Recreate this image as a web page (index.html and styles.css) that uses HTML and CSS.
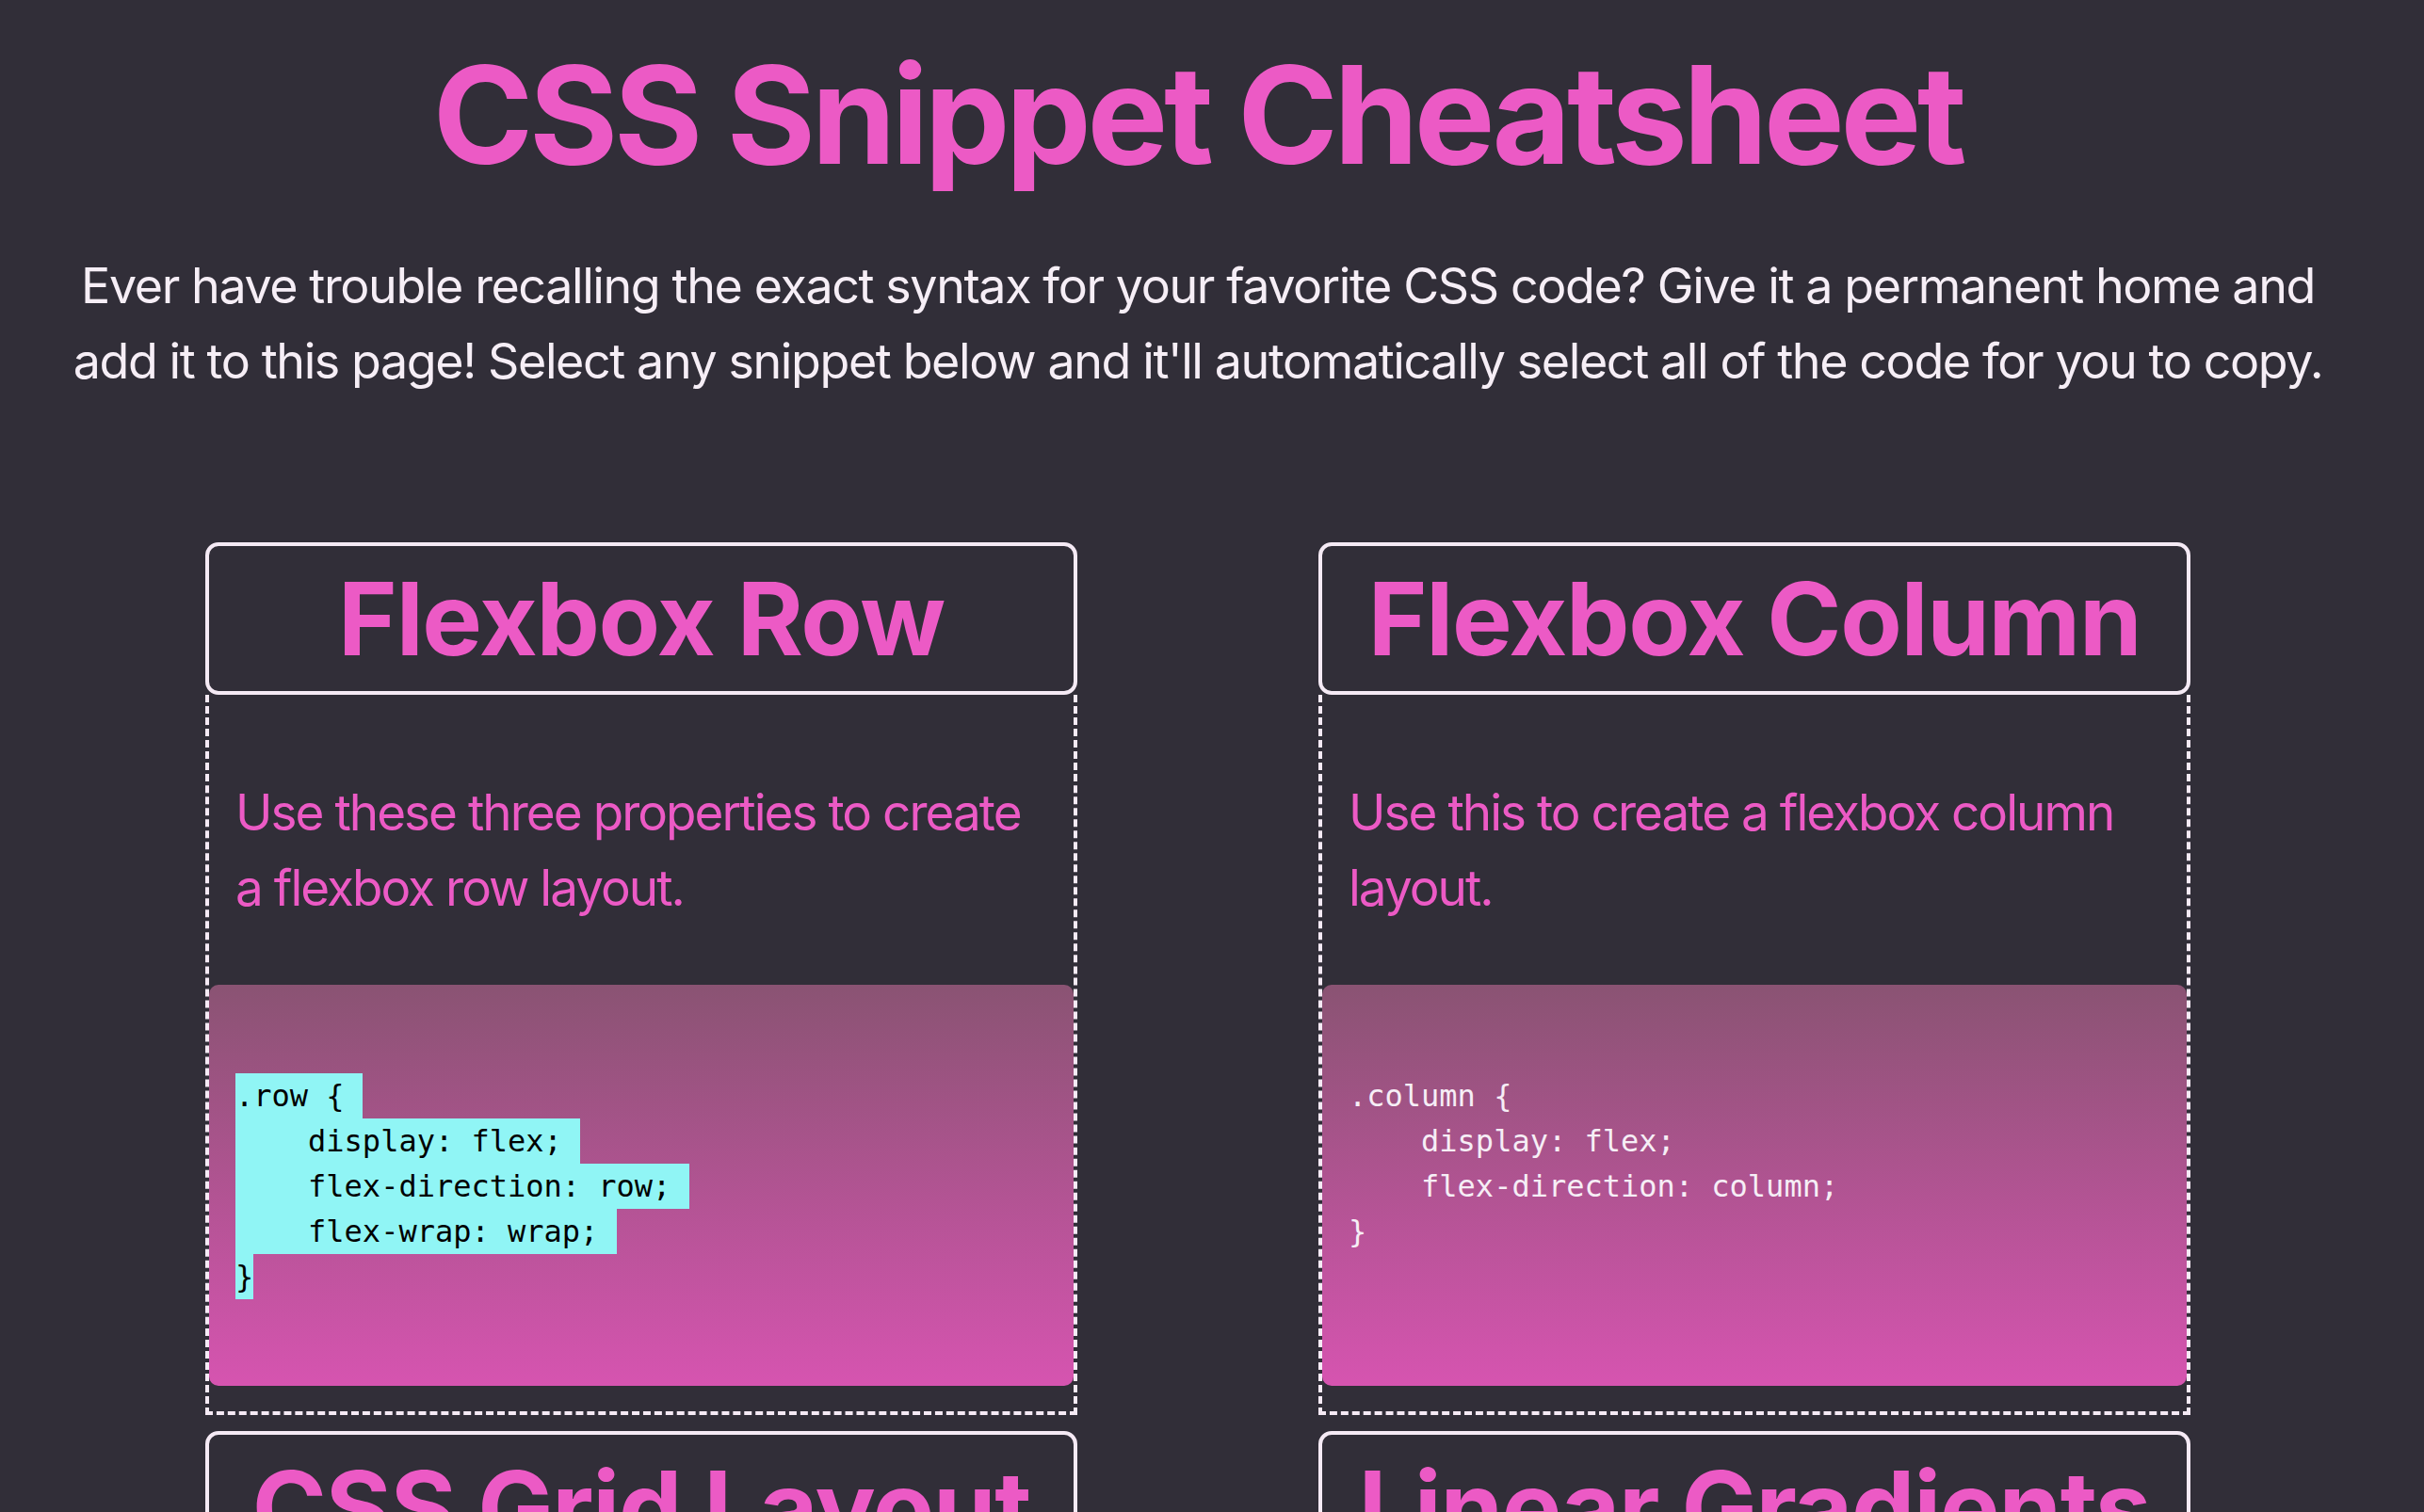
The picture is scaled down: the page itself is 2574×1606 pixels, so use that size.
FILE: index.html
```html
<!DOCTYPE html>
<html lang="en">
<head>
<meta charset="utf-8">
<title>CSS Snippet Cheatsheet</title>
<link rel="stylesheet" href="styles.css">
</head>
<body>
<h1 class="title">CSS Snippet Cheatsheet</h1>
<p class="intro">Ever have trouble recalling the exact syntax for your favorite CSS code? Give it a permanent home and add it to this page! Select any snippet below and it'll automatically select all of the code for you to copy.</p>
<main class="grid">
  <section class="card">
    <h2 class="card-title">Flexbox Row</h2>
    <div class="card-body">
      <p class="desc">Use these three properties to create a flexbox row layout.</p>
      <pre class="code"><span class="sel">.row {&nbsp;</span>
<span class="sel">    display: flex;&nbsp;</span>
<span class="sel">    flex-direction: row;&nbsp;</span>
<span class="sel">    flex-wrap: wrap;&nbsp;</span>
<span class="sel">}</span></pre>
    </div>
  </section>
  <section class="card">
    <h2 class="card-title">Flexbox Column</h2>
    <div class="card-body">
      <p class="desc">Use this to create a flexbox column layout.</p>
      <pre class="code">.column {
    display: flex;
    flex-direction: column;
}</pre>
    </div>
  </section>
  <section class="card">
    <h2 class="card-title">CSS Grid Layout</h2>
    <div class="card-body">
      <p class="desc">Build a 12-column grid using CSS Grid.</p>
      <pre class="code">.grid {
    display: grid;
    grid-template-columns: repeat(12, 1fr);
}</pre>
    </div>
  </section>
  <section class="card">
    <h2 class="card-title">Linear Gradients</h2>
    <div class="card-body">
      <p class="desc">Use this for a linear gradient background.</p>
      <pre class="code">.gradient {
    background: linear-gradient(#8b5373, #d654ae);
}</pre>
    </div>
  </section>
</main>
</body>
</html>
```
FILE: styles.css
```css
html, body {
  margin: 0;
  padding: 0;
  background: #312e38;
}
body {
  padding-right: 30px;
  font-family: Inter, "Noto Sans", sans-serif;
  color: #f6eef6;
}
.title {
  margin: 36px 0 0;
  text-align: center;
  font-size: 144px;
  line-height: 1.2;
  font-weight: 700;
  letter-spacing: -0.03em;
  color: #ec5ac5;
}
.intro {
  margin: 55px auto 0;
  max-width: 2440px;
  text-align: center;
  font-size: 52px;
  line-height: 80px;
  letter-spacing: -0.027em;
  color: #f6eef6;
}
.grid {
  display: grid;
  grid-template-columns: 926px 926px;
  justify-content: center;
  column-gap: 256px;
  row-gap: 17px;
  margin-top: 152px;
}
.card {
  display: flex;
  flex-direction: column;
}
.card-title {
  margin: 0;
  padding: 13px 0;
  border: 4px solid #f5eaf5;
  border-radius: 14px;
  text-align: center;
  font-size: 107px;
  line-height: 1.2;
  font-weight: 700;
  letter-spacing: -0.012em;
  color: #ec5ac5;
}
.card-body {
  border: 4px dashed #f5eaf5;
  border-top: none;
  padding-bottom: 27px;
}
.desc {
  margin: 85px 0 63px;
  padding: 0 28px;
  font-size: 53px;
  line-height: 80px;
  letter-spacing: -0.037em;
  color: #ec5ac5;
}
.code {
  box-sizing: border-box;
  height: 426px;
  margin: 0;
  padding: 94px 28px 0;
  border-radius: 10px;
  background: linear-gradient(180deg, #8a5373 0%, #d654b0 100%);
  font-family: "DejaVu Sans Mono", "Liberation Mono", monospace;
  font-size: 32px;
  line-height: 48px;
  color: #f6eef6;
  overflow: hidden;
}
.sel {
  display: inline-block;
  background: #90f5f5;
  color: #000;
}
```
